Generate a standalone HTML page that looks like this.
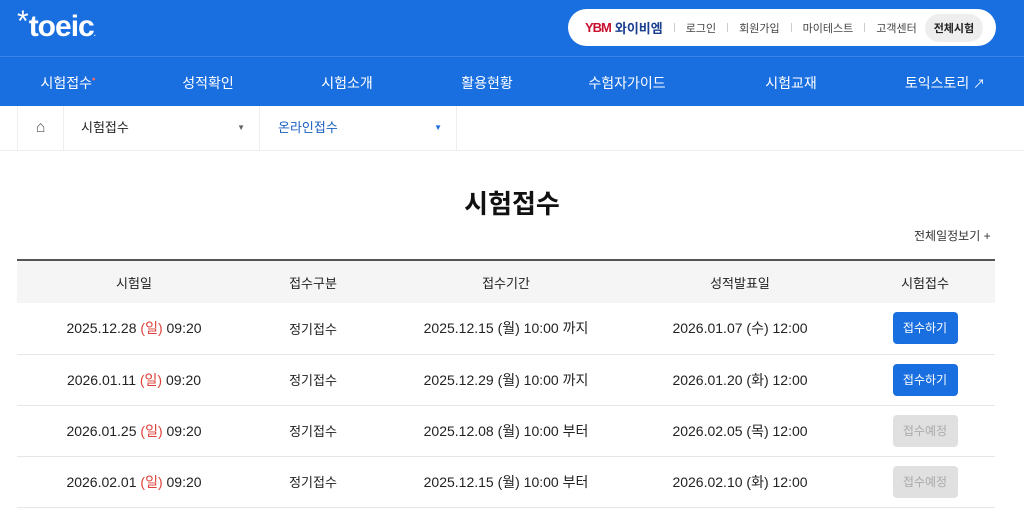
<!DOCTYPE html>
<html><head><meta charset="utf-8"><style>
*{margin:0;padding:0;box-sizing:border-box}
body{width:1024px;height:530px;overflow:hidden;background:#fff;font-family:"Liberation Sans","Noto Sans CJK KR",sans-serif;color:#222}
.top{height:57px;background:#1a6fe0;position:relative;border-bottom:1px solid #3a84e8}
.logo{position:absolute;left:17px;top:10px;color:#fff;font-size:30px;font-weight:bold;letter-spacing:-1px}
.logo i{font-style:normal;font-size:30px;font-weight:normal;vertical-align:top;position:relative;top:-5px;margin-right:1px}
.logo small{font-size:7px}
.pill{position:absolute;left:568px;top:9px;width:428px;height:37px;background:#fff;border-radius:19px;display:flex;align-items:center;font-size:11px;color:#444}
.ybm{margin-left:17px;color:#c8102e;font-weight:bold;font-size:13px;letter-spacing:-1px}
.ybmt{color:#1a3f8f;font-weight:bold;font-size:13px;margin-left:4px}
.sep{width:1px;height:9px;background:#ccc;margin:0 11px}
.all{background:#eee;border-radius:14px;padding:6px 9px;margin-left:8px;color:#222;font-weight:bold}
.nav{height:49px;background:#1a6fe0;position:relative;color:#fff;font-size:14px}
.nav span{position:absolute;top:16px;transform:translateX(-50%);white-space:nowrap}
.bc{height:45px;border-bottom:1px solid #eee;position:relative;font-size:13px}
.bc div{position:absolute;top:0;height:44px;border-left:1px solid #eee;line-height:44px}
h1{position:absolute;top:184px;width:100%;text-align:center;font-size:26px;font-weight:bold;color:#111}
.more{position:absolute;left:914px;top:227px;font-size:12px;color:#333}
table{position:absolute;left:17px;top:259px;width:978px;border-collapse:collapse;font-size:14px}
th{height:43px;background:#f5f5f5;border-top:2px solid #555;font-weight:normal;color:#222;font-size:13px}
td{height:51px;border-bottom:1px solid #e6e6e6;text-align:center;color:#222}
td:nth-child(2){font-size:13px}
th:nth-child(5),td:nth-child(5){padding-left:12px}
.r{color:#e0403a}
.b{display:inline-block;width:65px;height:32px;line-height:32px;border-radius:4px;background:#1a6fe0;color:#fff;font-size:12px}
.g{background:#e0e0e0;color:#aaa}
</style></head><body>
<div class="top"><div class="logo"><i>*</i>toeic<small>.</small></div>
<div class="pill"><span class="ybm">YBM</span><span class="ybmt">와이비엠</span><span class="sep"></span>로그인<span class="sep"></span>회원가입<span class="sep"></span>마이테스트<span class="sep"></span>고객센터<span class="all">전체시험</span></div></div>
<div class="nav"><span style="left:68px">시험접수<sup style="color:#ff6b6b;font-size:10px">•</sup></span><span style="left:208px">성적확인</span><span style="left:347px">시험소개</span><span style="left:487px">활용현황</span><span style="left:627px">수험자가이드</span><span style="left:791px">시험교재</span><span style="left:945px">토익스토리 <b style="font-weight:normal;font-size:12px">↗</b></span></div>
<div class="bc"><div style="left:17px;width:46px;text-align:center;font-size:16px;color:#555">⌂</div>
<div style="left:63px;width:196px;padding-left:17px">시험접수<span style="position:absolute;right:14px;font-size:8px;color:#666">▼</span></div>
<div style="left:259px;width:198px;padding-left:18px;color:#1a5fc0;border-right:1px solid #eee">온라인접수<span style="position:absolute;right:14px;font-size:8px;color:#1a6fe0">▼</span></div></div>
<h1>시험접수</h1>
<div class="more">전체일정보기 +</div>
<table><tr><th style="width:234px">시험일</th><th style="width:124px">접수구분</th><th style="width:262px">접수기간</th><th style="width:206px">성적발표일</th><th>시험접수</th></tr>
<tr><td>2025.12.28 <span class="r">(일)</span> 09:20</td><td>정기접수</td><td>2025.12.15 (월) 10:00 까지</td><td>2026.01.07 (수) 12:00</td><td><span class="b">접수하기</span></td></tr>
<tr><td>2026.01.11 <span class="r">(일)</span> 09:20</td><td>정기접수</td><td>2025.12.29 (월) 10:00 까지</td><td>2026.01.20 (화) 12:00</td><td><span class="b">접수하기</span></td></tr>
<tr><td>2026.01.25 <span class="r">(일)</span> 09:20</td><td>정기접수</td><td>2025.12.08 (월) 10:00 부터</td><td>2026.02.05 (목) 12:00</td><td><span class="b g">접수예정</span></td></tr>
<tr><td>2026.02.01 <span class="r">(일)</span> 09:20</td><td>정기접수</td><td>2025.12.15 (월) 10:00 부터</td><td>2026.02.10 (화) 12:00</td><td><span class="b g">접수예정</span></td></tr>
</table>
</body></html>
